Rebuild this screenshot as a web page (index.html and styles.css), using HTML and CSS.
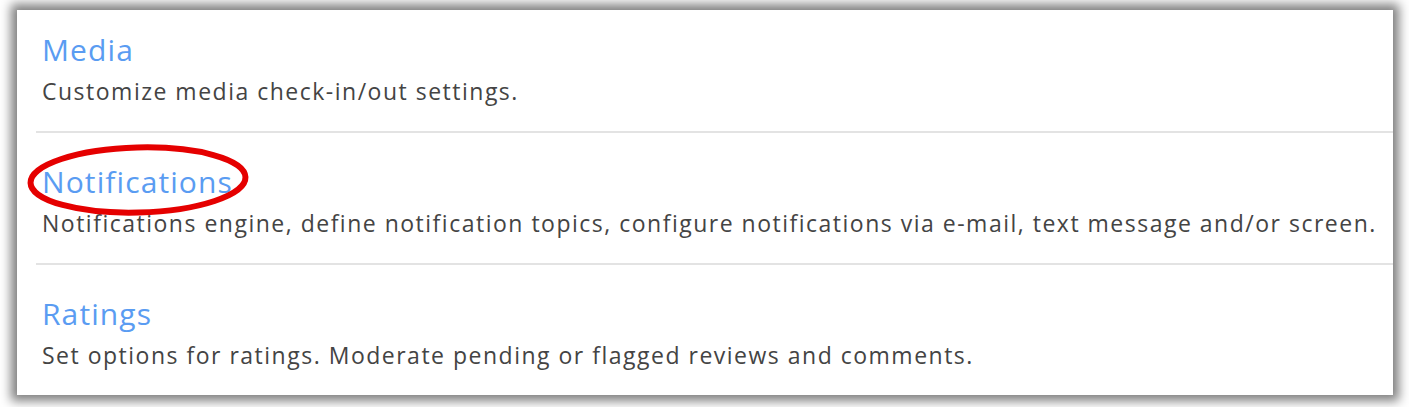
FILE: index.html
```html
<!DOCTYPE html>
<html lang="en">

<head>
    <meta charset="UTF-8">
    <meta name="viewport" content="width=device-width, initial-scale=1.0">
    <title>Settings</title>
    <link rel="stylesheet" href="styles.css">
</head>

<body>
    <div class="panel">
        <div class="item">
            <a href="#" class="item-title">Media</a>
            <p class="item-desc">Customize media check-in/out settings.</p>
        </div>
        <div class="item">
            <a href="#" class="item-title">Notifications</a>
            <p class="item-desc">Notifications engine, define notification topics, configure notifications via e-mail, text message and/or screen.</p>
            <!-- highlight annotation -->
            <svg class="highlight" width="224" height="76" viewBox="0 0 224 76">
                <ellipse cx="112" cy="38" rx="107.5" ry="32.5" fill="none" stroke="#e50000" stroke-width="6"
                    transform="rotate(-1.5 112 38)" />
            </svg>
        </div>
        <div class="item">
            <a href="#" class="item-title">Ratings</a>
            <p class="item-desc">Set options for ratings. Moderate pending or flagged reviews and comments.</p>
        </div>
    </div>
</body>

</html>
```

FILE: styles.css
```css
html,
body {
    height: 407px;
}

body {
    font-family: "Open Sans", Arial, sans-serif;
    margin: 0;
    padding-top: 10px;
    box-sizing: border-box;
    background-color: #fff;
    overflow: hidden;
}

.panel {
    background: #fff;
    width: 1376px;
    height: 385px;
    margin-left: 17px;
    box-shadow: 0 0 10px 6px rgba(0, 0, 0, 0.5);
}

.item {
    position: relative;
    margin-left: 19px;
    padding: 29px 0 25px 6px;
    border-top: 2px solid #e3e3e3;
}

.item:first-child {
    padding-top: 20px;
    border-top: none;
}

.item-title {
    display: block;
    font-size: 30px;
    line-height: 40px;
    letter-spacing: 1.1px;
    color: #5a9cf2;
    text-decoration: none;
}

.item-desc {
    margin: 6px 0 0;
    font-size: 23px;
    line-height: 30px;
    letter-spacing: 1.5px;
    color: #444;
}

.highlight {
    position: absolute;
    left: -10px;
    top: 9px;
}
```
